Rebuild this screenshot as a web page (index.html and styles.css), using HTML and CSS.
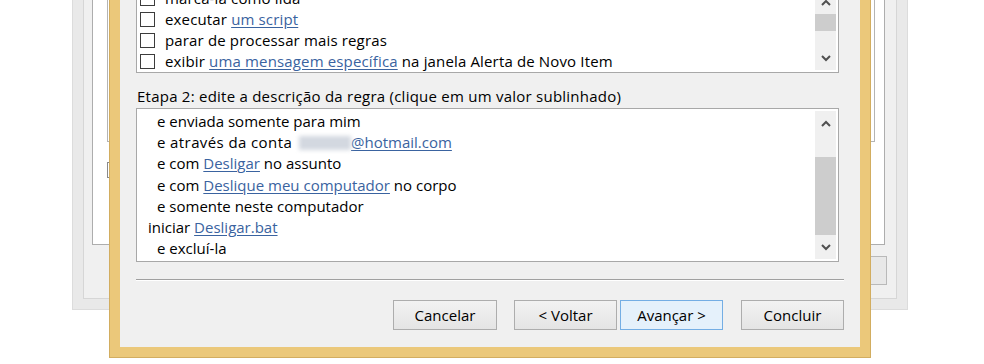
FILE: index.html
```html
<!DOCTYPE html>
<html lang="pt">
<head>
<meta charset="utf-8">
<title>Assistente de Regras</title>
<link rel="stylesheet" href="styles.css">
</head>
<body>
<div class="desktop">
  <div class="bgwin">
    <div class="bg-frame">
      <div class="bg-panel">
        <div class="bg-box"></div>
        <div class="bg-check"></div>
      </div>
      <div class="bg-btnrow"><div class="bg-btn"></div></div>
    </div>
  </div>

  <div class="dialog">
    <div class="list list-top">
      <div class="list-body">
        <div class="row"><span class="cb"></span><span>marca-la como lida</span></div>
        <div class="row"><span class="cb"></span><span>executar <a class="lnk">um script</a></span></div>
        <div class="row"><span class="cb"></span><span>parar de processar mais regras</span></div>
        <div class="row"><span class="cb"></span><span>exibir <a class="lnk">uma mensagem específica</a> na janela Alerta de Novo Item</span></div>
      </div>
      <div class="sb sb-top">
        <div class="sb-arrow sb-up"><svg width="10" height="7" viewBox="0 0 10 7"><path d="M1 6 L5 2 L9 6" fill="none" stroke="#505050" stroke-width="2"/></svg></div>
        <div class="sb-thumb thumb-top"></div>
        <div class="sb-track"></div>
        <div class="sb-arrow sb-down"><svg width="10" height="7" viewBox="0 0 10 7"><path d="M1 1 L5 5 L9 1" fill="none" stroke="#505050" stroke-width="2"/></svg></div>
      </div>
    </div>

    <div class="step-label">Etapa 2: edite a descrição da regra (clique em um valor sublinhado)</div>

    <div class="list list-desc">
      <div class="desc-body">
        <div class="line ind">e enviada somente para mim</div>
        <div class="line ind"><span class="wide">e através da conta</span> <span class="blur"></span><a class="lnk">@hotmail.com</a></div>
        <div class="line ind">e com <a class="lnk">Desligar</a> no assunto</div>
        <div class="line ind">e com <a class="lnk">Deslique meu computador</a> no corpo</div>
        <div class="line ind">e somente neste computador</div>
        <div class="line">iniciar <a class="lnk">Desligar.bat</a></div>
        <div class="line ind">e excluí-la</div>
      </div>
      <div class="sb sb-desc">
        <div class="sb-arrow sb-up"><svg width="10" height="7" viewBox="0 0 10 7"><path d="M1 6 L5 2 L9 6" fill="none" stroke="#505050" stroke-width="2"/></svg></div>
        <div class="sb-track gap-desc"></div>
        <div class="sb-thumb thumb-desc"></div>
        <div class="sb-arrow sb-down"><svg width="10" height="7" viewBox="0 0 10 7"><path d="M1 1 L5 5 L9 1" fill="none" stroke="#505050" stroke-width="2"/></svg></div>
      </div>
    </div>

    <div class="separator"></div>

    <div class="buttons">
      <button class="btn btn-cancel">Cancelar</button>
      <button class="btn btn-back">&lt; Voltar</button>
      <button class="btn btn-next">Avançar &gt;</button>
      <button class="btn">Concluir</button>
    </div>
  </div>
</div>
</body>
</html>
```

FILE: styles.css
```css
* { box-sizing: border-box; }
html, body {
  margin: 0;
  padding: 0;
  background: #ffffff;
  overflow: hidden;
}
body {
  font-family: "Open Sans", "Noto Sans", "Liberation Sans", sans-serif;
  font-size: 15px;
  color: #000;
}
.desktop {
  position: relative;
  width: 984px;
  height: 364px;
  overflow: hidden;
}

/* background window */
.bgwin {
  position: absolute;
  left: 72px;
  top: -20px;
  width: 836px;
  height: 330px;
  background: #e9e9e9;
  border: 1px solid #dcdcdc;
  padding: 10px;
}
.bg-frame {
  height: 100%;
  background: #f0f0f0;
  border: 1px solid #d6d6d6;
  padding: 0 11px 0 8px;
}
.bg-panel {
  height: 253px;
  background: #fff;
  border: 1px solid #adadad;
  padding: 0 9px 0 14px;
}
.bg-box {
  height: 149px;
  border: 1px solid #b4b4b4;
  border-top: 0;
}
.bg-check {
  margin-top: 20px;
  width: 20px;
  height: 16px;
  border: 1px solid #8a8a8a;
}
.bg-btnrow {
  display: flex;
  justify-content: flex-end;
  margin-top: 11px;
  margin-right: -2px;
}
.bg-btn {
  width: 40px;
  height: 29px;
  border: 1px solid #b9b9b9;
  background: #e8e8e8;
}

/* dialog */
.dialog {
  position: absolute;
  left: 110px;
  top: -23px;
  width: 760px;
  height: 380px;
  background: #f0f0f0;
  border: 10px solid #ebc87a;
  box-shadow: 0 0 0 1px #d2ad60;
  padding: 0 16px 0 16px;
  display: flex;
  flex-direction: column;
}
.list {
  background: #fff;
  border: 1px solid #a8a8a8;
  margin-right: 5px;
  display: flex;
}
.list-top { height: 86px; }
.list-body { flex: 1; padding-left: 3px; }
.row {
  height: 21px;
  display: flex;
  align-items: center;
  white-space: nowrap;
  letter-spacing: 0.15px;
  padding-bottom: 2px;
}
.cb {
  width: 15px;
  height: 15px;
  border: 1px solid #3c3c3c;
  background: #fff;
  margin-right: 10px;
  flex: none;
  margin-top: 2px;
}
.lnk {
  color: #3a63a0;
  text-decoration: underline;
  text-underline-offset: 2px;
}

.sb {
  width: 21px;
  margin: 2px 2px 2px 0;
  background: #f0f0f0;
  display: flex;
  flex-direction: column;
}
.sb-arrow {
  height: 24px;
  display: flex;
  align-items: center;
  justify-content: center;
  flex: none;
}
.sb-thumb { background: #cdcdcd; flex: none; }
.thumb-top { height: 17px; }
.sb-track { flex: 1; }
.gap-desc { flex: none; height: 22px; }
.thumb-desc { height: 78px; flex: none; }
.sb-desc .sb-down { margin-top: auto; }

.step-label {
  margin-top: 13px;
  height: 20px;
  line-height: 20px;
  margin-bottom: 2px;
  padding-left: 1px;
  white-space: nowrap;
  letter-spacing: 0.24px;
}
.list-desc { height: 154px; }
.desc-body {
  flex: 1;
  padding: 2px 0 0 11px;
}
.line {
  height: 21.2px;
  line-height: 21.2px;
  white-space: nowrap;
}
.ind { padding-left: 9px; }
.wide { letter-spacing: 0.4px; }
.blur {
  display: inline-block;
  width: 52px;
  height: 14px;
  vertical-align: -2px;
  background: #d3d8e0;
  filter: blur(2px);
  margin-left: 3px;
}

.separator {
  margin-top: 17px;
  height: 2px;
  border-top: 1px solid #a0a0a0;
  border-bottom: 1px solid #ffffff;
}
.buttons {
  margin-top: 19px;
  display: flex;
  justify-content: flex-end;
}
.btn {
  width: 103px;
  height: 30px;
  border: 1px solid #adadad;
  background: linear-gradient(#f2f2f2, #e4e4e4);
  font-family: "Open Sans", "Noto Sans", "Liberation Sans", sans-serif;
  font-size: 15px;
  color: #000;
  padding: 0;
  margin: 0;
}
.btn-cancel { width: 104px; margin-right: 17px; }
.btn-back { margin-right: 3px; }
.btn-next {
  margin-right: 18px;
  border-color: #74aee4;
  background: #e5f1fb;
}
```
